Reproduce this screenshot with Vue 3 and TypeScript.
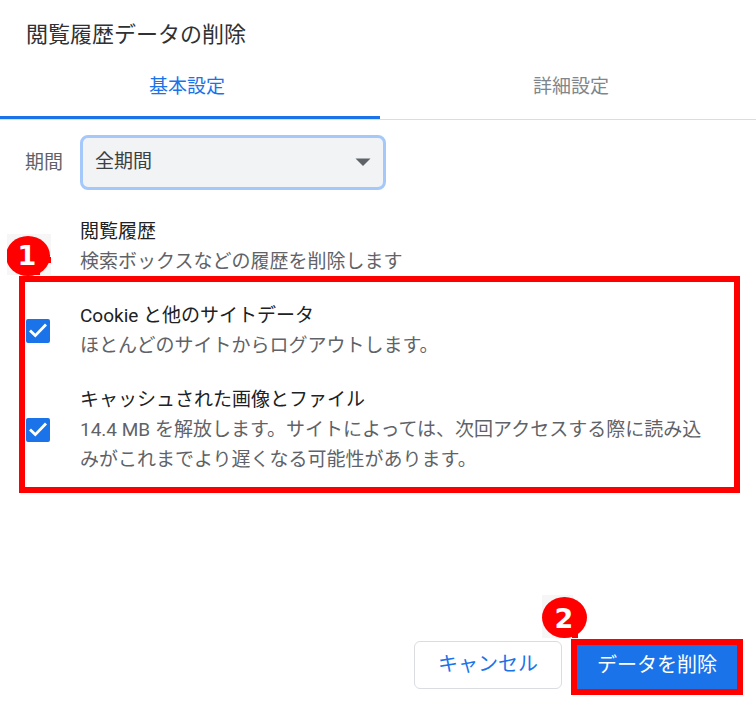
<script setup lang="ts">
import { ref } from 'vue'

interface DataType {
  id: string
  title: string
  description: string
}

const tabs: string[] = ['基本設定', '詳細設定']
const activeTab = ref(0)
const range = ref('all')
const selected = ref<string[]>(['cookies', 'cache'])

const dataTypes: DataType[] = [
  {
    id: 'cookies',
    title: 'Cookie と他のサイトデータ',
    description: 'ほとんどのサイトからログアウトします。',
  },
  {
    id: 'cache',
    title: 'キャッシュされた画像とファイル',
    description:
      '14.4 MB を解放します。サイトによっては、次回アクセスする際に読み込みがこれまでより遅くなる可能性があります。',
  },
]
</script>

<template>
  <main class="dialog">
    <h1 class="heading">閲覧履歴データの削除</h1>

    <div class="tabs" role="tablist">
      <button
        v-for="(tab, index) in tabs"
        :key="tab"
        class="tab"
        :class="{ active: activeTab === index }"
        type="button"
        role="tab"
        :aria-selected="activeTab === index"
        @click="activeTab = index"
      >
        {{ tab }}
      </button>
    </div>

    <div class="range">
      <label class="range-label" for="range">期間</label>
      <div class="select-box">
        <select id="range" v-model="range" class="select">
          <option value="all">全期間</option>
        </select>
        <svg class="arrow" viewBox="0 0 16 8" aria-hidden="true">
          <path d="M0.5 0.5H15.5L8 8Z" fill="#5f6368" />
        </svg>
      </div>
    </div>

    <section class="history">
      <h2 class="title">閲覧履歴</h2>
      <p class="description">検索ボックスなどの履歴を削除します</p>
    </section>

    <div class="marked marked-list">
      <svg class="badge badge-one" viewBox="0 0 45 43" aria-hidden="true">
        <rect width="44" height="41" fill="#f6f6f6" />
        <ellipse cx="21" cy="22" rx="22" ry="20" fill="#f00" />
        <path d="M40 23H44V29H41L33 37V41H24Z" fill="#f00" />
        <text class="number" x="20" y="31" text-anchor="middle">1</text>
      </svg>
      <div v-for="item in dataTypes" :key="item.id" class="item">
        <span class="check">
          <input :id="item.id" v-model="selected" class="check-input" type="checkbox" :value="item.id" />
          <svg class="tick" viewBox="0 0 24 24" aria-hidden="true">
            <path d="M4 11.500L9.300 16.600L20 5.500" fill="none" stroke="#fff" stroke-width="2.800" />
          </svg>
        </span>
        <label class="item-text" :for="item.id">
          <span class="title">{{ item.title }}</span>
          <span class="description">{{ item.description }}</span>
        </label>
      </div>
    </div>

    <footer class="actions">
      <button class="button cancel" type="button">キャンセル</button>
      <div class="marked marked-button">
        <svg class="badge badge-two" viewBox="0 0 45 43" aria-hidden="true">
          <rect width="31" height="43" fill="#f6f6f6" />
          <ellipse cx="22.500" cy="22.500" rx="22.500" ry="20.500" fill="#f00" />
          <path d="M30 35H36V43H30Z" fill="#f00" />
          <text class="number" x="22" y="33" text-anchor="middle">2</text>
        </svg>
        <button class="button confirm" type="button">データを削除</button>
      </div>
    </footer>
  </main>
</template>

<style>
body {
  margin: 0;
  background: #fff;
}
</style>

<style scoped>
.dialog,
.dialog * {
  box-sizing: border-box;
}

.dialog {
  display: flex;
  flex-direction: column;
  min-height: 100vh;
  color: #202124;
  font-family: Roboto, 'Noto Sans CJK JP', sans-serif;
  font-size: 19px;
  line-height: 30px;
}

.heading {
  margin: 0;
  padding: 20px 26px 4px;
  color: #303134;
  font-size: 22px;
  font-weight: 400;
}

.tabs {
  display: grid;
  grid-template-columns: 101fr 100fr;
  border-bottom: 1px solid #dadce0;
}

.tab {
  height: 65px;
  padding: 4px 6px 0 0;
  border: 0;
  border-bottom: 3px solid transparent;
  background: none;
  color: #80868b;
  font: inherit;
}

.tab:last-child {
  padding: 4px 0 0 6px;
}

.tab.active {
  border-color: #1a73e8;
  color: #1a73e8;
}

.range {
  display: flex;
  align-items: center;
  padding: 15px 25px 27px;
}

.range-label {
  flex: 0 0 55px;
  color: #5f6368;
}

.select-box {
  display: grid;
  flex: 0 1 306px;
  align-items: center;
}

.select {
  grid-area: 1 / 1;
  width: 100%;
  height: 55px;
  padding: 0 40px 2px 12px;
  border: 3px solid #a5c8fa;
  border-radius: 8px;
  outline: 0;
  appearance: none;
  background: #f1f3f4;
  color: #3c4043;
  font: inherit;
}

.arrow {
  grid-area: 1 / 1;
  justify-self: end;
  width: 16px;
  height: 8px;
  margin: 0 15px 2px 0;
  pointer-events: none;
}

.history {
  padding: 0 25px 0 80px;
}

.title {
  display: block;
  margin: 0;
  color: #202124;
  font-size: 19px;
  font-weight: 400;
}

.description {
  display: block;
  margin: 0;
  color: #5f6368;
}

.marked {
  position: relative;
  border: 6px solid #f00;
}

.marked-list {
  display: flex;
  flex-direction: column;
  gap: 24px;
  margin: -1px 16px 24px 19px;
  padding: 19px 20px 12px 1px;
}

.item {
  display: flex;
  align-items: center;
  gap: 30px;
}

.item-text {
  flex: 1;
}

.check {
  display: grid;
  flex: 0 0 24px;
}

.check-input {
  grid-area: 1 / 1;
  width: 24px;
  height: 24px;
  margin: 0;
  border: 2px solid #5f6368;
  border-radius: 2px;
  appearance: none;
}

.check-input:checked {
  border-color: #1a73e8;
  background: #1a73e8;
}

.tick {
  grid-area: 1 / 1;
  width: 24px;
  height: 24px;
  pointer-events: none;
}

.check-input:not(:checked) + .tick {
  visibility: hidden;
}

.badge {
  position: absolute;
  width: 45px;
  height: 43px;
}

.badge-one {
  top: -48px;
  left: -18px;
}

.badge-two {
  top: -50px;
  left: -35px;
}

.number {
  fill: #fff;
  font-family: 'DejaVu Sans', sans-serif;
  font-size: 27px;
  font-weight: 700;
}

.actions {
  display: flex;
  align-items: center;
  justify-content: flex-end;
  gap: 9px;
  margin-top: auto;
  padding: 0 13px 11px;
}

.button {
  border: 0;
  font: inherit;
  font-size: 20px;
}

.cancel {
  width: 148px;
  height: 48px;
  margin-bottom: 4px;
  padding: 0 0 2px;
  border: 1px solid #dadce0;
  border-radius: 6px;
  background: #fff;
  color: #1a73e8;
}

.confirm {
  display: block;
  width: 160px;
  height: 44px;
  padding: 0 0 4px;
  background: #1a73e8;
  color: #fff;
}
</style>
